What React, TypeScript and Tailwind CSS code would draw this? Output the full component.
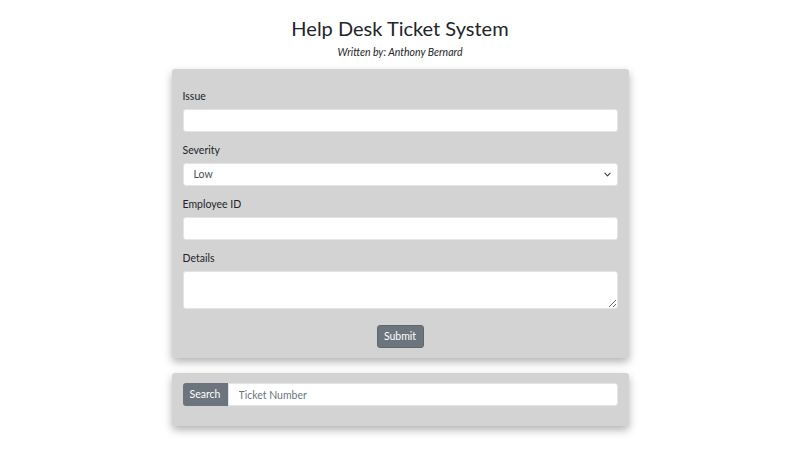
import { useState } from 'react';

const SEVERITIES = ['Low', 'Medium', 'High'];

function Field({ label, children }: { label: string; children: React.ReactNode }) {
  return (
    <div className="mb-[10px]">
      <label className="block h-4 mb-[5px] text-[10.5px] leading-4 text-[#212529]">{label}</label>
      {children}
    </div>
  );
}

export default function App() {
  const [severity, setSeverity] = useState('Low');

  const inputCls =
    'block w-full h-[23px] bg-white border border-[#e4e4e4] rounded-[3px] px-[10px] text-[10.5px] text-[#495057] outline-none';

  return (
    <div className="min-h-[450px] bg-white font-['Lato',sans-serif] text-[#212529]">
      <div className="flex flex-col items-center pt-[14px]">
        <h1 className="text-[20px] leading-[28px] font-normal">Help Desk Ticket System</h1>
        <p className="text-[10.5px] leading-[14px] italic mt-[3px]">Written by: Anthony Bernard</p>
      </div>

      <div className="w-[457px] mx-auto mt-[10px]">
        {/* ticket form */}
        <form
          className="bg-[#d3d3d3] rounded-[3px] px-[11px] pt-[19px] pb-[10px] shadow-[0_4px_8px_rgba(0,0,0,0.3)]"
          onSubmit={(e) => e.preventDefault()}
        >
          <Field label="Issue">
            <input className={inputCls} />
          </Field>
          <Field label="Severity">
            <select
              className={inputCls + ' appearance-none'}
              value={severity}
              onChange={(e) => setSeverity(e.target.value)}
              style={{
                backgroundImage:
                  "url(\"data:image/svg+xml,%3csvg xmlns='http://www.w3.org/2000/svg' viewBox='0 0 16 16'%3e%3cpath fill='none' stroke='%23343a40' stroke-linecap='round' stroke-linejoin='round' stroke-width='2.5' d='M2 5l6 6 6-6'/%3e%3c/svg%3e\")",
                backgroundRepeat: 'no-repeat',
                backgroundPosition: 'right 6px center',
                backgroundSize: '7px 7px',
              }}
            >
              {SEVERITIES.map((s) => (
                <option key={s}>{s}</option>
              ))}
            </select>
          </Field>
          <Field label="Employee ID">
            <input className={inputCls} />
          </Field>
          <div>
            <label className="block h-4 mb-[5px] text-[10.5px] leading-4">Details</label>
            <textarea className="block w-full h-[38px] bg-white border border-[#e4e4e4] rounded-[3px] px-[10px] py-1 text-[10.5px] outline-none" />
          </div>
          <div className="flex justify-center mt-4">
            <button className="w-[47px] h-[23px] bg-[#6c757d] text-white text-[10.5px] rounded-[3px] border border-[#5f676e]">
              Submit
            </button>
          </div>
        </form>

        {/* ticket lookup */}
        <div className="mt-[15px] bg-[#d3d3d3] rounded-[3px] px-[11px] pt-[10px] pb-5 shadow-[0_4px_8px_rgba(0,0,0,0.3)]">
          <div className="flex h-[23px]">
            <button className="w-[45px] h-full bg-[#6c757d] text-white text-[10.5px] rounded-l-[3px]">Search</button>
            <input
              placeholder="Ticket Number"
              className="flex-1 h-full bg-white border border-[#e4e4e4] rounded-r-[3px] px-[10px] text-[10.5px] placeholder:text-[#6c757d] outline-none"
            />
          </div>
        </div>
      </div>
    </div>
  );
}
